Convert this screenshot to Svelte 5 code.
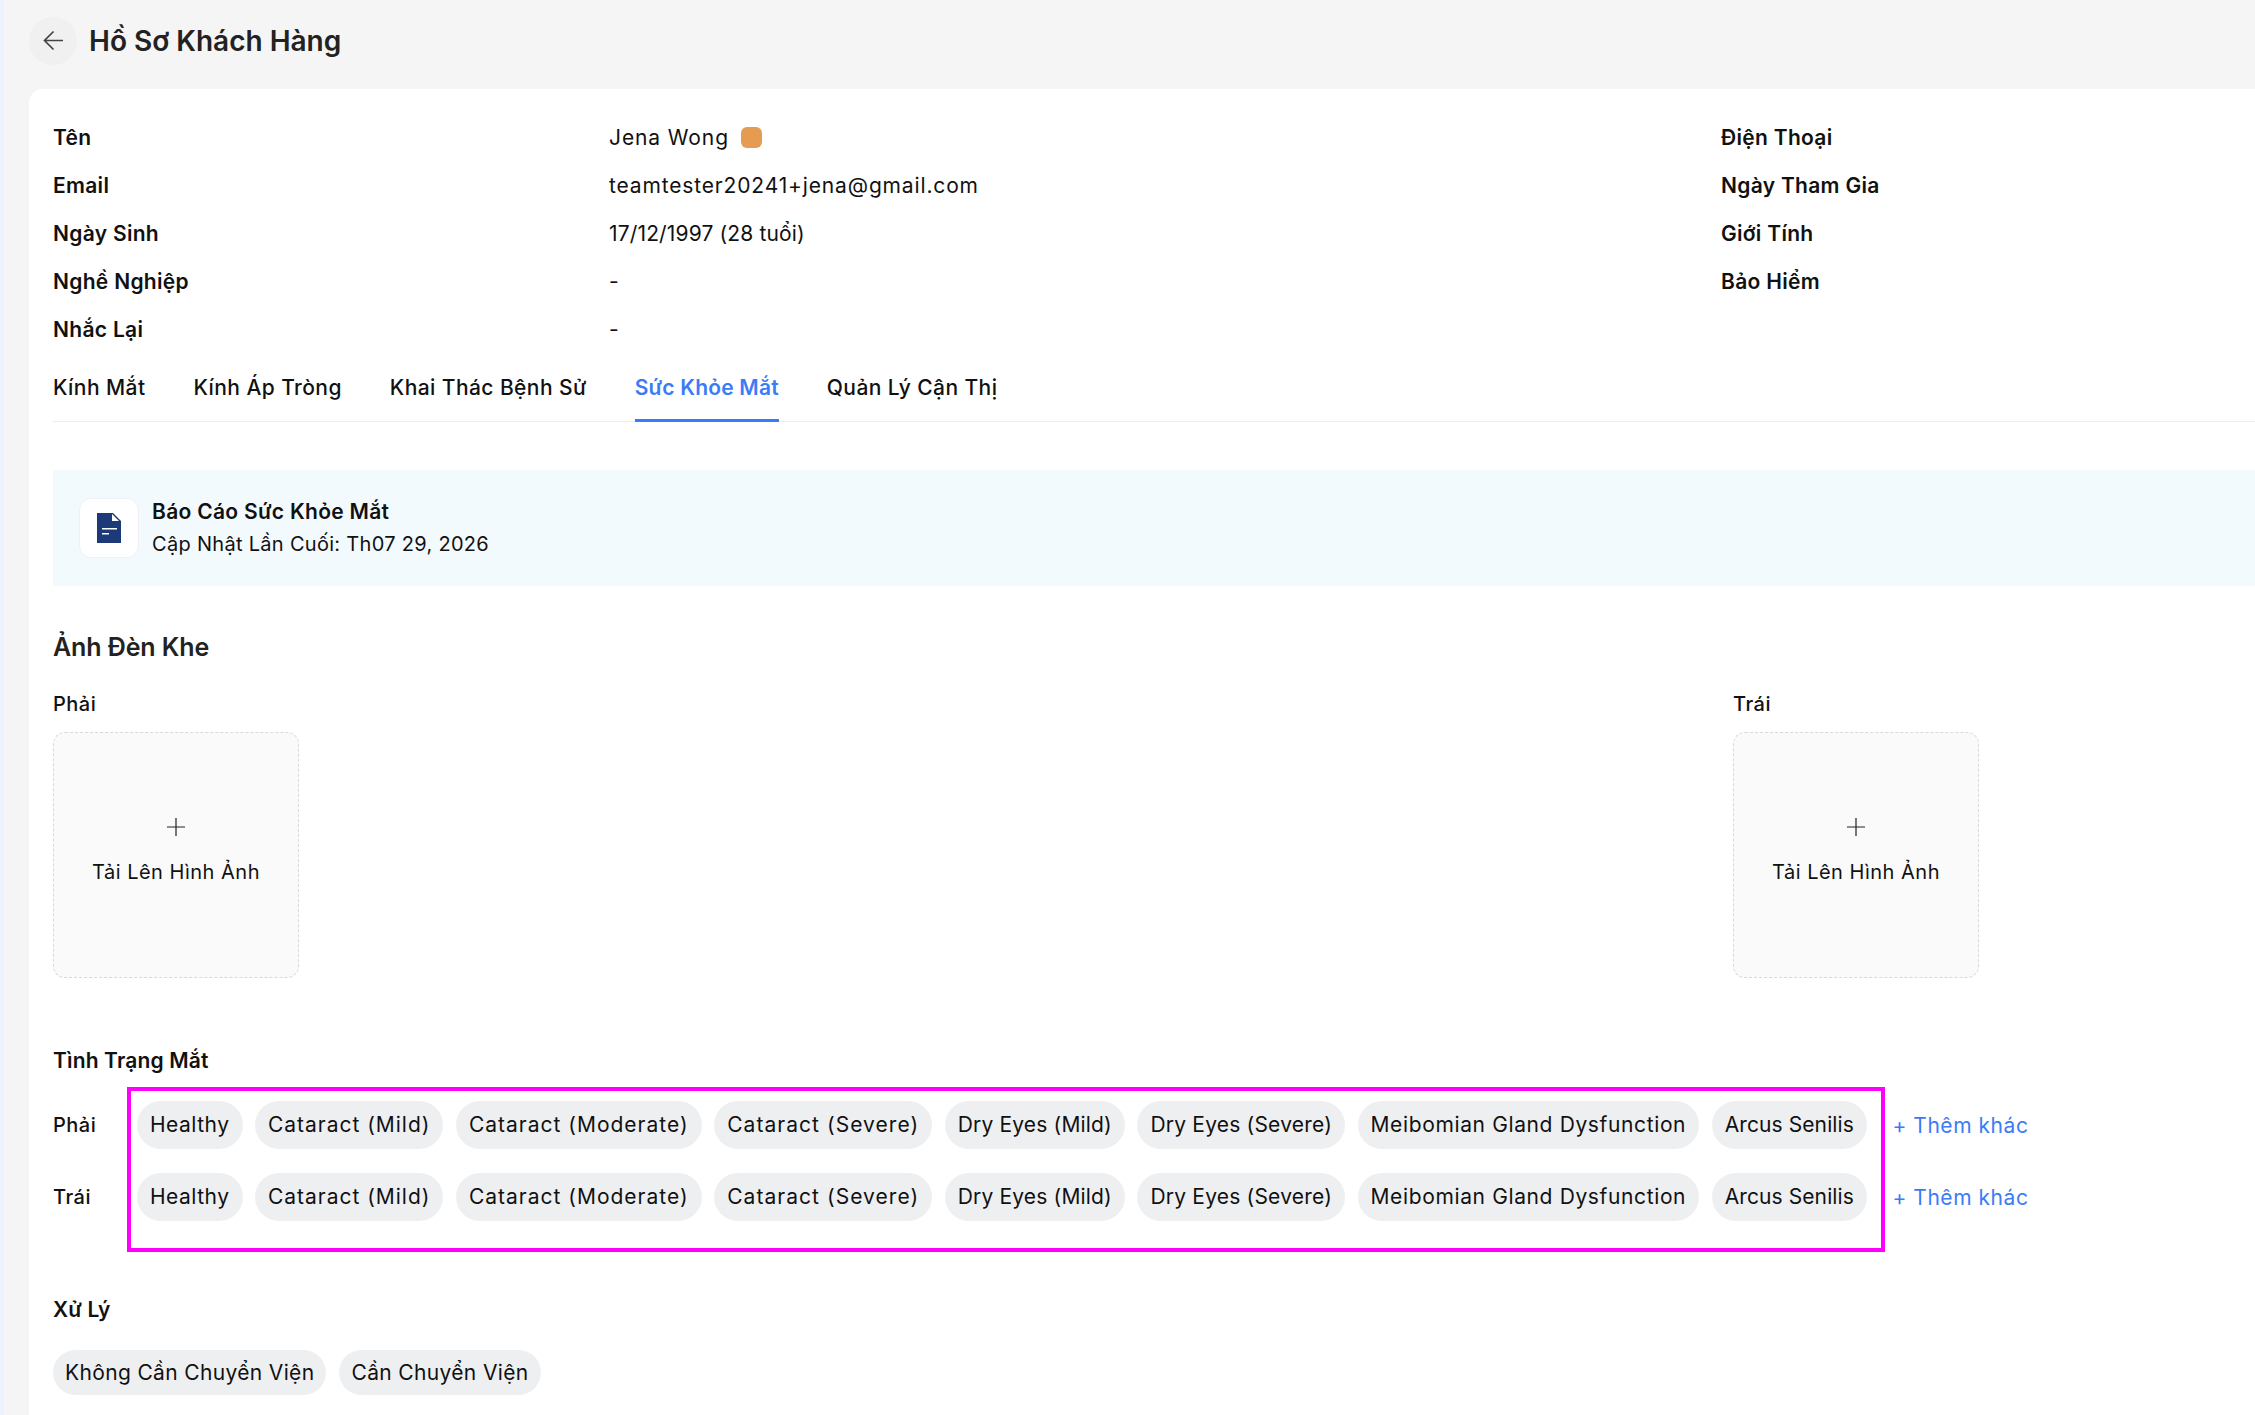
<script lang="ts">
  // ls = letter-spacing tuned per item so widths line up with the design
  const leftInfo = [
    { label: 'Tên', value: 'Jena Wong', ls: 0.9, badge: true },
    { label: 'Email', value: 'teamtester20241+jena@gmail.com', ls: 0.85 },
    { label: 'Ngày Sinh', value: '17/12/1997 (28 tuổi)', ls: 0.15 },
    { label: 'Nghề Nghiệp', value: '-', ls: 0.65 },
    { label: 'Nhắc Lại', value: '-', ls: 0.65 },
  ];
  const rightInfo = ['Điện Thoại', 'Ngày Tham Gia', 'Giới Tính', 'Bảo Hiểm'];
  const tabs = ['Kính Mắt', 'Kính Áp Tròng', 'Khai Thác Bệnh Sử', 'Sức Khỏe Mắt', 'Quản Lý Cận Thị'];
  const activeTab = 'Sức Khỏe Mắt';
  const conditions = [
    { name: 'Healthy', ls: 0.5 },
    { name: 'Cataract (Mild)', ls: 0.98 },
    { name: 'Cataract (Moderate)', ls: 1 },
    { name: 'Cataract (Severe)', ls: 1.05 },
    { name: 'Dry Eyes (Mild)', ls: 0.17 },
    { name: 'Dry Eyes (Severe)', ls: 0.2 },
    { name: 'Meibomian Gland Dysfunction', ls: 0.63 },
    { name: 'Arcus Senilis', ls: 0.1 },
  ];
  const eyes = ['Phải', 'Trái'];
</script>

<div class="page">
  <div class="strip"></div>
  <main class="main">
    <header class="top">
      <button type="button" class="back" aria-label="Quay lại">
        <svg width="21" height="21" viewBox="0 0 21 21" fill="none" stroke="#444" stroke-width="1.7">
          <path d="M20 10.5H1.5M10.5 1.5l-9 9 9 9" />
        </svg>
      </button>
      <h1>Hồ Sơ Khách Hàng</h1>
    </header>

    <section class="card">
      <div class="info">
        <div class="info-left">
          {#each leftInfo as row}
            <div class="info-row">
              <span class="info-label">{row.label}</span>
              <span class="info-value" style="letter-spacing: {row.ls}px">
                {row.value}
                {#if row.badge}<i class="badge"></i>{/if}
              </span>
            </div>
          {/each}
        </div>
        <div class="info-right">
          {#each rightInfo as label}
            <div class="info-row"><span class="info-label">{label}</span></div>
          {/each}
        </div>
      </div>

      <nav class="tabs">
        {#each tabs as tab}
          <span class="tab" class:active={tab === activeTab}>{tab}</span>
        {/each}
      </nav>

      <div class="report">
        <div class="report-icon">
          <svg width="24" height="30" viewBox="0 0 24 30">
            <path fill="#1c3a78" d="M0 0h16l8 8v22H0z" />
            <path fill="#fff" d="M15 1v7h7z" />
            <path fill="#fff" d="M5 15h15v1.6H5zM5 20h7v1.6H5z" />
          </svg>
        </div>
        <div>
          <div class="report-title">Báo Cáo Sức Khỏe Mắt</div>
          <div class="report-sub">Cập Nhật Lần Cuối: Th07 29, 2026</div>
        </div>
      </div>

      <h2 class="section-title">Ảnh Đèn Khe</h2>
      <div class="photos">
        {#each eyes as eye}
          <div class="photo">
            <div class="photo-label">{eye}</div>
            <div class="upload">
              <svg width="18" height="18" viewBox="0 0 18 18" stroke="#222" stroke-width="1.2">
                <path d="M9 0v18M0 9h18" />
              </svg>
              <span>Tải Lên Hình Ảnh</span>
            </div>
          </div>
        {/each}
      </div>

      <h3 class="group-title">Tình Trạng Mắt</h3>
      <div class="conditions">
        {#each eyes as eye}
          <div class="cond-row">
            <span class="cond-label">{eye}</span>
            {#each conditions as c}
              <span class="pill" style="letter-spacing: {c.ls}px">{c.name}</span>
            {/each}
            <span class="more">+ Thêm khác</span>
          </div>
        {/each}
        <div class="highlight"></div>
      </div>

      <h3 class="group-title treat">Xử Lý</h3>
      <div class="treat-row">
        <span class="pill small">Không Cần Chuyển Viện</span>
        <span class="pill small">Cần Chuyển Viện</span>
      </div>
    </section>
  </main>
</div>

<style>
  :global(body) {
    margin: 0;
    overflow: hidden;
  }

  .page {
    display: flex;
    width: 2255px;
    height: 1415px;
    overflow: hidden;
    background: #f5f5f5;
    color: #111;
    font-family: Inter, 'Noto Sans', sans-serif;
    font-size: 21px;
    letter-spacing: 0.65px;
  }

  .strip {
    flex: 0 0 4px;
    background: #eef2fd;
  }

  .main {
    flex: 1;
    min-width: 0;
    padding-left: 25px;
  }

  .top {
    display: flex;
    align-items: center;
    gap: 12px;
    height: 89px;
    padding-bottom: 8px;
    box-sizing: border-box;
  }

  .back {
    display: flex;
    align-items: center;
    justify-content: center;
    width: 48px;
    height: 48px;
    padding: 0;
    border: none;
    border-radius: 50%;
    background: #f0f0f0;
  }

  h1 {
    margin: 0;
    font-size: 28px;
    font-weight: 600;
    letter-spacing: 0;
    color: #222;
  }

  .card {
    height: 1400px;
    margin-right: -40px;
    padding: 24px 24px 0;
    background: #fff;
    border-radius: 14px 0 0 0;
  }

  .info {
    display: grid;
    grid-template-columns: 1668px 1fr;
  }

  .info-row {
    display: flex;
    align-items: center;
    height: 48px;
  }

  .info-label {
    flex: 0 0 556px;
    font-weight: 600;
    letter-spacing: 0.3px;
  }

  .info-value {
    display: flex;
    align-items: center;
    gap: 12px;
  }

  .badge {
    width: 21px;
    height: 21px;
    border-radius: 6px;
    background: #e39c52;
  }

  .tabs {
    display: flex;
    gap: 48px;
    height: 69px;
    box-sizing: border-box;
    padding-top: 17px;
    border-bottom: 1px solid #ececec;
  }

  .tab {
    height: 52px;
    box-sizing: border-box;
    font-weight: 500;
    letter-spacing: 0.42px;
    line-height: 36px;
  }

  .tab.active {
    color: #3b7bf6;
    font-weight: 600;
    letter-spacing: 0.2px;
    border-bottom: 3px solid #3b7bf6;
  }

  .report {
    display: flex;
    align-items: center;
    gap: 13px;
    height: 116px;
    margin-top: 48px;
    padding-left: 26px;
    background: #f3fafe;
  }

  .report-icon {
    display: flex;
    align-items: center;
    justify-content: center;
    width: 60px;
    height: 60px;
    box-sizing: border-box;
    background: #fff;
    border: 1px solid #eef0f6;
    border-radius: 12px;
  }

  .report-title {
    font-weight: 600;
    letter-spacing: 0.3px;
    line-height: 33px;
  }

  .report-sub {
    font-size: 20px;
    letter-spacing: 0.3px;
    line-height: 33px;
  }

  .section-title {
    margin: 43px 0 0;
    font-size: 25px;
    line-height: 36px;
    font-weight: 600;
    letter-spacing: -0.1px;
    color: #222;
  }

  .photos {
    display: grid;
    grid-template-columns: 1680px 1fr;
    margin-top: 24px;
  }

  .photo-label {
    font-size: 20px;
    line-height: 30px;
    font-weight: 500;
    letter-spacing: 0.5px;
  }

  .upload {
    display: flex;
    flex-direction: column;
    align-items: center;
    gap: 24px;
    width: 246px;
    height: 246px;
    box-sizing: border-box;
    margin-top: 13px;
    padding-top: 85px;
    font-size: 20px;
    letter-spacing: 0.5px;
    background: #fafafa;
    border: 1px dashed #d9d9d9;
    border-radius: 12px;
  }

  .group-title {
    margin: 67px 0 0;
    font-size: 21px;
    line-height: 32px;
    font-weight: 600;
    letter-spacing: 0.15px;
  }

  .conditions {
    position: relative;
    margin-top: 24px;
  }

  .cond-row {
    display: flex;
    align-items: center;
    gap: 12.5px;
    margin-bottom: 24px;
  }

  .cond-label {
    flex: 0 0 71.5px;
    font-size: 20px;
    font-weight: 500;
    letter-spacing: 0.5px;
  }

  .pill {
    padding: 0 13px;
    height: 48px;
    line-height: 48px;
    border-radius: 24px;
    background: #eeeff1;
    white-space: nowrap;
  }

  .more {
    margin-left: 13px;
    color: #3b7bf6;
    letter-spacing: 0.55px;
    white-space: nowrap;
  }

  .highlight {
    position: absolute;
    left: 74px;
    top: -14px;
    width: 1758px;
    height: 165px;
    box-sizing: border-box;
    border: 4px solid #ff00ff;
    pointer-events: none;
  }

  .group-title.treat {
    margin-top: 73px;
  }

  .treat-row {
    display: flex;
    gap: 13px;
    margin-top: 24px;
  }

  .pill.small {
    height: 45px;
    line-height: 45px;
    padding: 0 12px;
    letter-spacing: 0.35px;
  }
</style>
